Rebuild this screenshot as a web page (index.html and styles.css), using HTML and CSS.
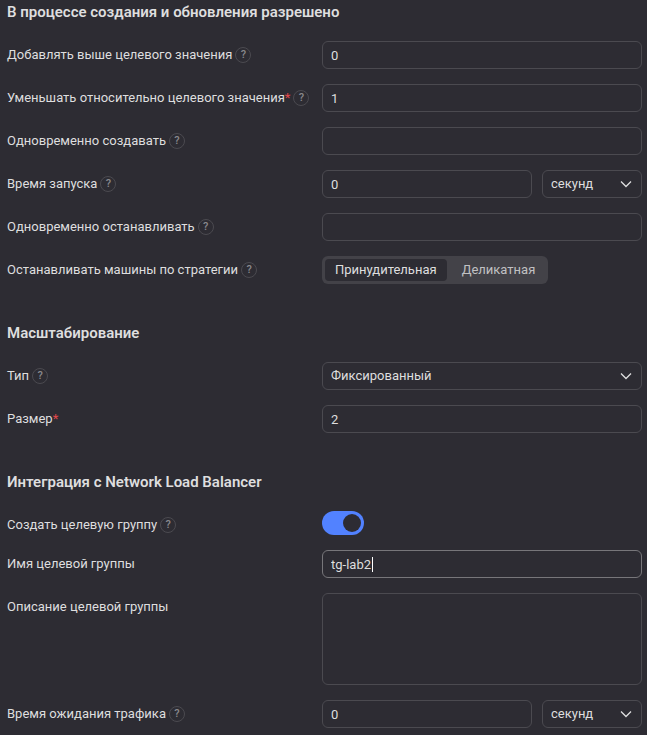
FILE: index.html
```html
<!DOCTYPE html>
<html lang="ru">
<head>
    <meta charset="UTF-8">
    <meta name="viewport" content="width=device-width, initial-scale=1.0">
    <title>Группа виртуальных машин</title>
    <link rel="stylesheet" href="styles.css">
</head>
<body>
    <form class="form">
        <section class="section">
            <h2 class="section-title">В процессе создания и обновления разрешено</h2>
            <div class="row">
                <div class="row-label">
                    <label for="expansion">Добавлять выше целевого значения</label>
                    <button type="button" class="help">?</button>
                </div>
                <div class="row-control">
                    <input class="field" type="text" id="expansion" value="0">
                </div>
            </div>
            <div class="row">
                <div class="row-label">
                    <label for="unavailable">Уменьшать относительно целевого значения<span class="required">*</span></label>
                    <button type="button" class="help">?</button>
                </div>
                <div class="row-control">
                    <input class="field" type="text" id="unavailable" value="1">
                </div>
            </div>
            <div class="row">
                <div class="row-label">
                    <label for="creating">Одновременно создавать</label>
                    <button type="button" class="help">?</button>
                </div>
                <div class="row-control">
                    <input class="field" type="text" id="creating">
                </div>
            </div>
            <div class="row">
                <div class="row-label">
                    <label for="startup">Время запуска</label>
                    <button type="button" class="help">?</button>
                </div>
                <div class="row-control">
                    <input class="field" type="text" id="startup" value="0">
                    <div class="select-box unit">
                        <select class="field" aria-label="Единица">
                            <option>секунд</option>
                        </select>
                        <svg class="chevron" viewBox="0 0 16 16"><path d="M3 5.5l5 5 5-5"/></svg>
                    </div>
                </div>
            </div>
            <div class="row">
                <div class="row-label">
                    <label for="deleting">Одновременно останавливать</label>
                    <button type="button" class="help">?</button>
                </div>
                <div class="row-control">
                    <input class="field" type="text" id="deleting">
                </div>
            </div>
            <div class="row">
                <div class="row-label">
                    <span id="strategyLabel">Останавливать машины по стратегии</span>
                    <button type="button" class="help">?</button>
                </div>
                <div class="row-control">
                    <div class="radio-group" role="radiogroup" aria-labelledby="strategyLabel">
                        <label class="radio"><input type="radio" name="strategy" checked><span>Принудительная</span></label>
                        <label class="radio"><input type="radio" name="strategy"><span>Деликатная</span></label>
                    </div>
                </div>
            </div>
        </section>

        <section class="section">
            <h2 class="section-title">Масштабирование</h2>
            <div class="row">
                <div class="row-label">
                    <label for="scaleType">Тип</label>
                    <button type="button" class="help">?</button>
                </div>
                <div class="row-control">
                    <div class="select-box">
                        <select class="field" id="scaleType">
                            <option>Фиксированный</option>
                        </select>
                        <svg class="chevron" viewBox="0 0 16 16"><path d="M3 5.5l5 5 5-5"/></svg>
                    </div>
                </div>
            </div>
            <div class="row">
                <div class="row-label">
                    <label for="size">Размер<span class="required">*</span></label>
                </div>
                <div class="row-control">
                    <input class="field" type="text" id="size" value="2">
                </div>
            </div>
        </section>

        <section class="section">
            <h2 class="section-title">Интеграция с Network Load Balancer</h2>
            <div class="row">
                <div class="row-label">
                    <label for="createGroup">Создать целевую группу</label>
                    <button type="button" class="help">?</button>
                </div>
                <div class="row-control">
                    <input class="switch" type="checkbox" id="createGroup" checked>
                </div>
            </div>
            <div class="row">
                <div class="row-label">
                    <label for="groupName">Имя целевой группы</label>
                </div>
                <div class="row-control name-box">
                    <input class="field active" type="text" id="groupName" value="tg-lab2">
                    <span class="caret"></span>
                </div>
            </div>
            <div class="row">
                <div class="row-label">
                    <label for="groupDescription">Описание целевой группы</label>
                </div>
                <div class="row-control">
                    <textarea class="field" id="groupDescription"></textarea>
                </div>
            </div>
            <div class="row">
                <div class="row-label">
                    <label for="traffic">Время ожидания трафика</label>
                    <button type="button" class="help">?</button>
                </div>
                <div class="row-control">
                    <input class="field" type="text" id="traffic" value="0">
                    <div class="select-box unit">
                        <select class="field" aria-label="Единица">
                            <option>секунд</option>
                        </select>
                        <svg class="chevron" viewBox="0 0 16 16"><path d="M3 5.5l5 5 5-5"/></svg>
                    </div>
                </div>
            </div>
        </section>
    </form>
</body>
</html>
```
FILE: styles.css
```css
* {
    box-sizing: border-box;
}

body {
    margin: 0;
    background: #2d2c33;
    color: #dededf;
    font-family: Roboto, "Noto Sans", sans-serif;
    font-size: 13px;
    line-height: 18px;
}

.form {
    display: flex;
    flex-direction: column;
    gap: 39px;
    padding: 2px 5px 7px 7px;
}

.section {
    display: flex;
    flex-direction: column;
    gap: 15px;
}

.section-title {
    margin: 0 0 4px;
    font-size: 15px;
    line-height: 20px;
    font-weight: 600;
}

.row {
    display: flex;
    align-items: flex-start;
}

.row-label {
    display: flex;
    flex: 0 0 315px;
    align-items: center;
    gap: 3px;
    padding-top: 5px;
    white-space: nowrap;
}

.row-control {
    display: flex;
    flex: 1;
    gap: 10px;
    min-width: 0;
}

.required {
    color: #e5484b;
}

/* Round question mark next to a label */
.help {
    width: 16px;
    height: 16px;
    padding: 0;
    border: 1px solid #4b4a50;
    border-radius: 50%;
    background: none;
    color: #89898d;
    font-family: inherit;
    font-size: 11px;
    line-height: 14px;
    font-weight: 500;
}

.field {
    flex: 1;
    width: 100%;
    min-width: 0;
    height: 28px;
    margin: 0;
    padding: 0 8px;
    border: 1px solid #4b4a50;
    border-radius: 6px;
    outline: none;
    background: none;
    color: inherit;
    font: inherit;
    appearance: none;
}

.field.active {
    border-color: #77767a;
}

textarea.field {
    height: 92px;
    padding: 4px 8px;
    resize: none;
}

/* Select with its own arrow */
.select-box {
    display: flex;
    flex: 1;
    position: relative;
}

.select-box.unit {
    flex: 0 0 100px;
}

.chevron {
    position: absolute;
    top: 6px;
    right: 8px;
    width: 16px;
    height: 16px;
    fill: none;
    stroke: #dededf;
    stroke-width: 1.3;
    pointer-events: none;
}

/* Strategy buttons */
.radio-group {
    display: flex;
    padding: 3px;
    border-radius: 6px;
    background: #434248;
}

.radio input {
    position: absolute;
    opacity: 0;
    margin: 0;
}

.radio span {
    display: block;
    padding: 0 10px;
    border-radius: 4px;
    line-height: 22px;
    color: #c0c0c2;
}

.radio + .radio span {
    padding: 0 10px 0 15px;
}

.radio input:checked + span {
    background: #2d2c33;
    color: #dededf;
}

/* Toggle */
.switch {
    display: flex;
    justify-content: flex-end;
    width: 42px;
    height: 24px;
    margin: 0;
    padding: 3px;
    border-radius: 12px;
    background: #5282ff;
    appearance: none;
}

.switch::before {
    content: "";
    width: 18px;
    height: 18px;
    border-radius: 50%;
    background: #2d2c33;
}

.name-box {
    position: relative;
}

.caret {
    position: absolute;
    top: 7px;
    left: 50px;
    width: 1px;
    height: 15px;
    background: #fff;
}
```
